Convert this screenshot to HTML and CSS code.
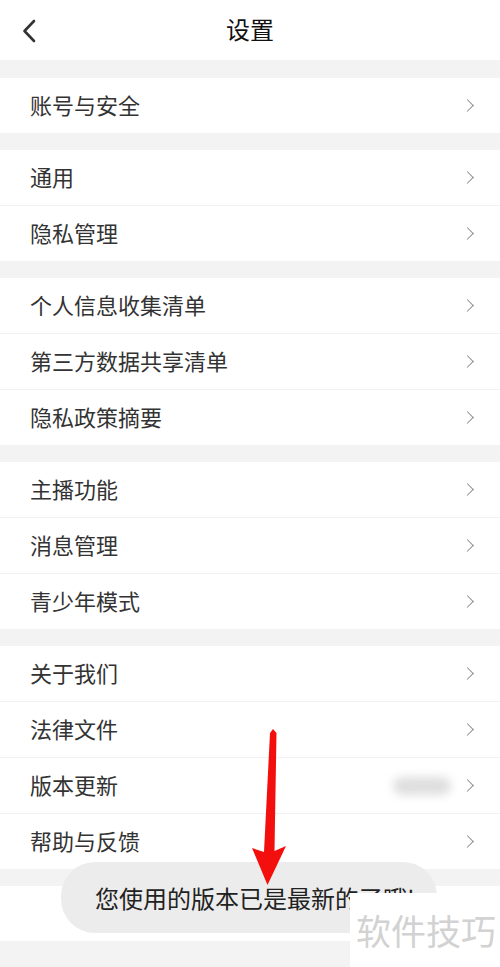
FILE: index.html
```html
<!DOCTYPE html>
<html lang="zh-CN">
<head>
<meta charset="utf-8">
<link rel="stylesheet" href="styles.css">
</head>
<body>
<div class="page">
  <header class="topbar">
    <span class="back">
      <svg width="14" height="24" viewBox="0 0 14 24"><path d="M12 2 L2.5 12 L12 22" fill="none" stroke="#333" stroke-width="2.6" stroke-linecap="round" stroke-linejoin="round"/></svg>
    </span>
    <h1 class="title">设置</h1>
  </header>

  <section class="group">
    <div class="row"><span class="label">账号与安全</span><span class="chev"></span></div>
  </section>

  <section class="group">
    <div class="row"><span class="label">通用</span><span class="chev"></span></div>
    <div class="row"><span class="label">隐私管理</span><span class="chev"></span></div>
  </section>

  <section class="group">
    <div class="row"><span class="label">个人信息收集清单</span><span class="chev"></span></div>
    <div class="row"><span class="label">第三方数据共享清单</span><span class="chev"></span></div>
    <div class="row"><span class="label">隐私政策摘要</span><span class="chev"></span></div>
  </section>

  <section class="group">
    <div class="row"><span class="label">主播功能</span><span class="chev"></span></div>
    <div class="row"><span class="label">消息管理</span><span class="chev"></span></div>
    <div class="row"><span class="label">青少年模式</span><span class="chev"></span></div>
  </section>

  <section class="group">
    <div class="row"><span class="label">关于我们</span><span class="chev"></span></div>
    <div class="row"><span class="label">法律文件</span><span class="chev"></span></div>
    <div class="row"><span class="label">版本更新</span><span class="blur"></span><span class="chev"></span></div>
    <div class="row"><span class="label">帮助与反馈</span><span class="chev"></span></div>
  </section>

  <section class="group">
    <div class="row"></div>
  </section>

  <div class="toast">您使用的版本已是最新的了哦!</div>
  <div class="watermark">软件技巧</div>
  <svg class="arrow" width="500" height="967" viewBox="0 0 500 967">
    <path d="M273 729 L276.5 733 L274.5 851 L286 846 L267.5 885 L252 848 L264 852 L270 733 Z" fill="#f40f0f"/>
  </svg>
</div>
</body>
</html>
```

FILE: styles.css
```css
* { box-sizing: border-box; margin: 0; padding: 0; }
html, body { width: 500px; height: 967px; overflow: hidden; }
body {
  background: #f3f3f3;
  font-family: "Noto Sans CJK SC", "Noto Sans", sans-serif;
  color: #333;
}
.page { position: relative; width: 500px; height: 967px; }
.topbar {
  height: 60px;
  background: #fff;
  display: flex;
  align-items: center;
  justify-content: center;
  position: relative;
  margin-bottom: 18px;
  padding-bottom: 2px;
}
.back {
  position: absolute;
  left: 22px;
  top: 19px;
  display: flex;
}
.title {
  font-size: 24px;
  font-weight: 400;
  color: #111;
  line-height: 1;
}
.group {
  background: #fff;
  margin-bottom: 17px;
  display: flex;
  flex-direction: column;
}
.row {
  height: 55px;
  display: flex;
  align-items: center;
  padding: 0 26px 4px 30px;
}
.row + .row { border-top: 1px solid #f1f1f1; height: 56px; }
.label {
  font-size: 22px;
  line-height: 1;
  color: #333;
  flex: 1;
}
.chev {
  width: 9px;
  height: 9px;
  border-top: 1.8px solid #8e8e8e;
  border-right: 1.8px solid #8e8e8e;
  transform: rotate(45deg);
  margin-right: 2px;
  margin-top: 3px;
}
.blur {
  width: 58px;
  height: 18px;
  background: #dedede;
  border-radius: 9px;
  filter: blur(5px);
  margin-right: 12px;
  margin-top: 4px;
}
.toast {
  position: absolute;
  left: 61px;
  top: 862px;
  width: 376px;
  height: 71px;
  border-radius: 34px;
  background: #ececec;
  font-size: 24px;
  color: #222;
  line-height: 71px;
  padding-left: 34px;
  white-space: nowrap;
  overflow: hidden;
}
.watermark {
  position: absolute;
  left: 350px;
  top: 893px;
  width: 150px;
  height: 74px;
  background: #fff;
  font-size: 35px;
  color: #d2d2d2;
  padding-left: 6px;
  line-height: 74px;
  white-space: nowrap;
}
.arrow { position: absolute; left: 0; top: 0; pointer-events: none; }
```
